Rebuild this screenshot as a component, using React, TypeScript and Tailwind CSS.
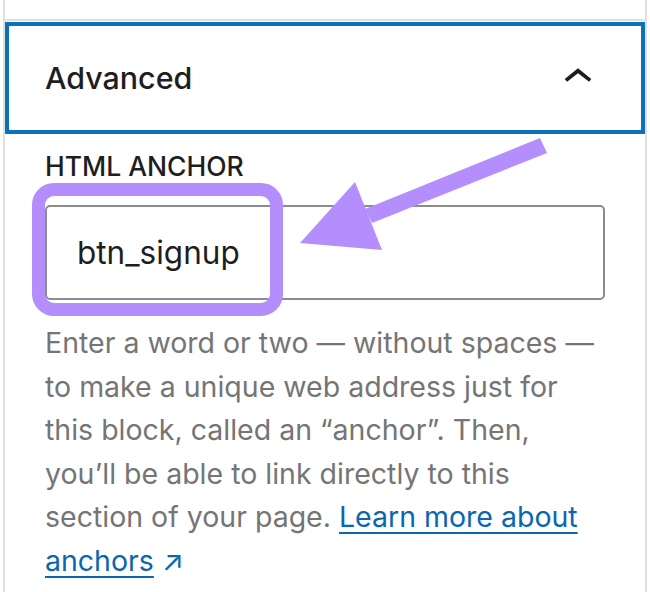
import { useState } from "react";

const font = "font-['Inter','Noto_Sans',sans-serif]";

function ChevronUp() {
  return (
    <svg viewBox="0 0 24 24" className="w-[58px] h-[58px] shrink-0" fill="#1e1e1e">
      <path d="M6.5 12.4L12 8l5.5 4.4-.9 1.2L12 10l-4.5 3.6-1-1.2z" />
    </svg>
  );
}

export default function App() {
  const [anchor, setAnchor] = useState("btn_signup");

  return (
    <div className={`relative w-[650px] h-[592px] overflow-hidden bg-white ${font}`}>
      {/* sidebar column */}
      <div className="ml-[3px] w-[644px] h-full border-x-2 border-[#e0e0e0] pt-[19px]">
        <div className="border-t-2 border-[#e0e0e0] pt-px">
          {/* Panel toggle, focused */}
          <button className="flex h-[112px] w-full items-center justify-between border-4 border-[#0b72b8] pl-[36px] pr-[34px] text-left">
            <span className="text-[30.4px] font-medium leading-none text-[#1e1e1e]">Advanced</span>
            <ChevronUp />
          </button>

          {/* Panel body */}
          <div className="px-[40px] pt-[17px]">
            <label className="block text-[26.5px] font-medium uppercase leading-[31px] text-[#1e1e1e]">
              HTML anchor
            </label>
            <input
              value={anchor}
              onChange={(e) => setAnchor(e.target.value)}
              className={`mt-[23px] block h-[95px] w-full rounded-[5px] border-2 border-[#8c8c8c] pl-[30px] text-[31.5px] text-[#1e1e1e] outline-none ${font}`}
            />
            <p className="mt-[21px] text-[28.5px] leading-[43.6px] text-[#757575]">
              Enter a word or two — without spaces —<br />
              to make a unique web address just for<br />
              this block, called an “anchor”. Then,<br />
              you’ll be able to link directly to this<br />
              section of your page.{" "}
              <a href="#" className="text-[#0b66b0] underline decoration-2 underline-offset-[5px]">
                Learn more about
                <br />
                anchors
              </a>
              <span className="text-[#0b66b0]"> ↗</span>
            </p>
          </div>
        </div>
      </div>

      {/* Annotation: highlight around the field */}
      <div className="pointer-events-none absolute left-[32px] top-[183px] h-[133px] w-[251px] rounded-[22px] border-[13px] border-[#b48efc]" />

      {/* Annotation: arrow */}
      <svg className="pointer-events-none absolute inset-0" width="650" height="592" viewBox="0 0 650 592">
        <polygon points="365,209 540,138 547,153 372,223" fill="#b48efc" />
        <polygon points="300,243 355,182 382,250" fill="#b48efc" />
      </svg>
    </div>
  );
}
